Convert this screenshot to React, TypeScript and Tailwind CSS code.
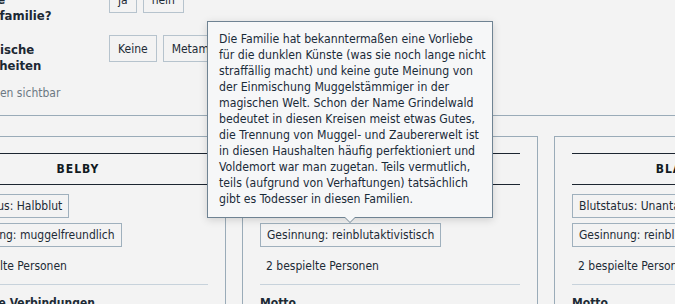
const tooltipLines = [
  "Die Familie hat bekanntermaßen eine Vorliebe",
  "für die dunklen Künste (was sie noch lange nicht",
  "straffällig macht) und keine gute Meinung von",
  "der Einmischung Muggelstämmiger in der",
  "magischen Welt. Schon der Name Grindelwald",
  "bedeutet in diesen Kreisen meist etwas Gutes,",
  "die Trennung von Muggel- und Zaubererwelt ist",
  "in diesen Haushalten häufig perfektioniert und",
  "Voldemort war man zugetan. Teils vermutlich,",
  "teils (aufgrund von Verhaftungen) tatsächlich",
  "gibt es Todesser in diesen Familien.",
];

const families = [
  {
    name: "Belby",
    blood: "Blutstatus: Halbblut",
    mind: "Gesinnung: muggelfreundlich",
    players: "2 bespielte Personen",
    next: "Bekannte Verbindungen",
  },
  {
    name: "Grindelwald",
    blood: "Blutstatus: Reinblut (kontinental)",
    mind: "Gesinnung: reinblutaktivistisch",
    players: "2 bespielte Personen",
    next: "Motto",
  },
  {
    name: "Blackthorn",
    blood: "Blutstatus: Unantastbar",
    mind: "Gesinnung: reinblutaktivistisch",
    players: "2 bespielte Personen",
    next: "Motto",
  },
];

function FamilyCard({ f }: { f: (typeof families)[number] }) {
  return (
    <div className="w-[296px] shrink-0 border border-[#9aabb8] px-[17px] pt-4">
      {/* Name */}
      <div className="flex h-[32px] items-center justify-center border-y border-[#1c2530] text-[12px] font-bold uppercase tracking-[1px] text-[#111a22]">
        {f.name}
      </div>

      <div className="mt-[9px] flex flex-col items-start gap-[5px]">
        <span className="flex h-[24px] items-center border border-[#9fb0bd] px-[6px]">{f.blood}</span>
        <span className="flex h-[24px] items-center border border-[#9fb0bd] px-[6px]">{f.mind}</span>
      </div>

      <div className="mt-[11px] px-[6px] leading-[16px]">{f.players}</div>
      <div className="mt-[10px] border-t border-[#c7d2db]" />
      <div className="mt-[10px] font-bold leading-[16px]">{f.next}</div>
      <div className="h-10" />
    </div>
  );
}

export default function App() {
  return (
    <div className="relative h-[304px] w-[675px] overflow-hidden bg-[#f3f3f3] font-['DejaVu_Sans_Condensed','DejaVu_Sans',sans-serif] text-[12px] text-[#1d2b36]">
      <div className="-ml-[70px] -mt-[14px] w-[960px]">
        {/* Form rows */}
        <div className="grid grid-cols-[172px_1fr] gap-y-[11px] pl-[7px]">
          <div className="pt-[6px] text-[13px] font-bold leading-[16px] text-[#1c2833]">
            Ist es eine
            <br />
            Reinblutsfamilie?
          </div>
          <div className="flex items-start gap-[6px]">
            <button className="h-[27px] border border-[#b6c3cd] px-[8px]">ja</button>
            <button className="h-[27px] border border-[#b6c3cd] px-[8px]">nein</button>
          </div>

          <div className="pt-[7px] text-[13px] font-bold leading-[16px] text-[#1c2833]">
            Erbl. magische
            <br />
            Besonderheiten
          </div>
          <div className="flex items-start gap-[6px]">
            <button className="h-[27px] border border-[#b6c3cd] px-[8px]">Keine</button>
            <button className="h-[27px] border border-[#b6c3cd] px-[8px]">Metamorphmagus</button>
            <button className="h-[27px] border border-[#b6c3cd] px-[8px]">Parselmund</button>
          </div>
        </div>

        <div className="mt-[11px] pl-[7px] leading-[16px] text-[#6d7983]">Nur in Profilen sichtbar</div>

        {/* Family cards */}
        <div className="mt-[14px] border-t border-[#9aabb8] pt-[20px]">
          <div className="flex gap-4">
            {families.map((f) => (
              <FamilyCard key={f.name} f={f} />
            ))}
          </div>
        </div>
      </div>

      {/* Tooltip */}
      <div className="absolute left-[207px] top-[21px] w-[286px] border border-[#6f8393] bg-[#f6f7f8] px-[11px] pb-[10px] pt-[9px] text-[12.2px] leading-[16px] text-[#1a2b38] shadow-[0_2px_8px_rgba(0,0,0,0.15)]">
        {tooltipLines.map((line) => (
          <div key={line} className="whitespace-nowrap">
            {line}
          </div>
        ))}
        <div className="absolute -bottom-[6px] left-1/2 h-0 w-0 -translate-x-1/2 border-x-[6px] border-t-[6px] border-x-transparent border-t-[#6f8393]" />
        <div className="absolute -bottom-[5px] left-1/2 h-0 w-0 -translate-x-1/2 border-x-[5px] border-t-[5px] border-x-transparent border-t-[#f6f7f8]" />
      </div>
    </div>
  );
}
